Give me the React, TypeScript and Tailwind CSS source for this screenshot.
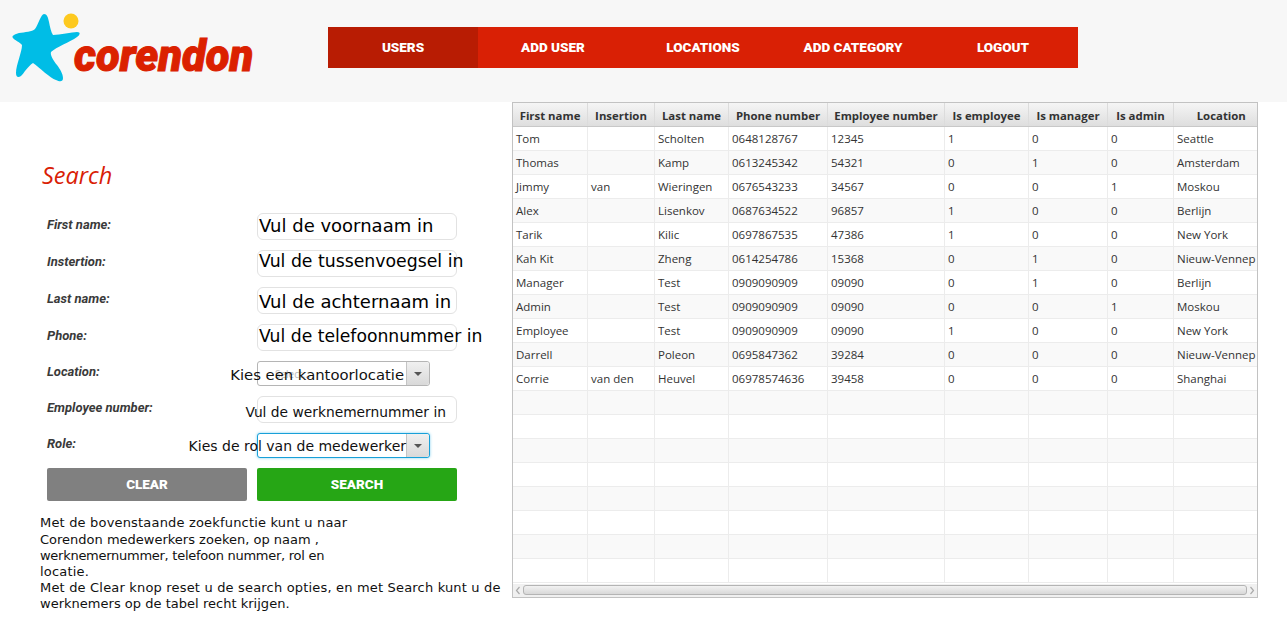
const columns = [
  { name: "First name", width: "w-[74.5px]" },
  { name: "Insertion", width: "w-[67px]" },
  { name: "Last name", width: "w-[74px]" },
  { name: "Phone number", width: "w-[99px]" },
  { name: "Employee number", width: "w-[117px]" },
  { name: "Is employee", width: "w-[84px]" },
  { name: "Is manager", width: "w-[79px]" },
  { name: "Is admin", width: "w-[66px]" },
  { name: "Location", width: "w-[83.5px]" },
];

const rows = [
  ["Tom", "", "Scholten", "0648128767", "12345", "1", "0", "0", "Seattle"],
  ["Thomas", "", "Kamp", "0613245342", "54321", "0", "1", "0", "Amsterdam"],
  ["Jimmy", "van", "Wieringen", "0676543233", "34567", "0", "0", "1", "Moskou"],
  ["Alex", "", "Lisenkov", "0687634522", "96857", "1", "0", "0", "Berlijn"],
  ["Tarik", "", "Kilic", "0697867535", "47386", "1", "0", "0", "New York"],
  ["Kah Kit", "", "Zheng", "0614254786", "15368", "0", "1", "0", "Nieuw-Vennep"],
  ["Manager", "", "Test", "0909090909", "09090", "0", "1", "0", "Berlijn"],
  ["Admin", "", "Test", "0909090909", "09090", "0", "0", "1", "Moskou"],
  ["Employee", "", "Test", "0909090909", "09090", "1", "0", "0", "New York"],
  ["Darrell", "", "Poleon", "0695847362", "39284", "0", "0", "0", "Nieuw-Vennep"],
  ["Corrie", "van den", "Heuvel", "06978574636", "39458", "0", "0", "0", "Shanghai"],
  ...Array.from({ length: 8 }, () => ["", "", "", "", "", "", "", "", ""]),
];

const navItems = ["Users", "Add user", "Locations", "Add category", "Logout"];

function Logo() {
  return (
    <div className="flex w-[328px] shrink-0 items-start pl-[11px] pt-[12px]">
      <svg width="72" height="72" viewBox="11 12 72 72" className="shrink-0">
        <path
          fill="#00bde6"
          d="M44 14 C47 14 48 17 49 22 C50 27 51 32 53 35 C60 35 72 32 77 32 C81 32 80 35 77 37 C70 42 56 47 51 52 C50 55 53 60 57 65 C60 69 63 74 63 78 C63 82 60 82 56 80 C50 78 40 68 33 63 C28 66 24 73 21 76 C18 78 16 77 16 73 C16 65 22 52 22 45 C20 42 14 40 13 38 C11 36 15 34 19 33 C25 32 32 32 35 29 C38 25 41 14 44 14 Z"
        />
        <circle cx="71" cy="21" r="7.5" fill="#fdc91f" />
      </svg>
      <span className="-ml-[9px] mt-[21px] font-['Roboto',sans-serif] text-[43.5px] leading-[48px] font-black text-[#db2100] italic [-webkit-text-stroke:1px_#db2100]">
        corendon
      </span>
    </div>
  );
}

function Header() {
  return (
    <header className="flex h-[102px] bg-[#f7f7f7]">
      <Logo />
      <nav className="mt-[27px] flex h-[41px] w-[750px] bg-[#d92005]">
        {navItems.map((item, i) => (
          <a
            key={item}
            className={`flex w-[150px] items-center justify-center font-['Roboto',sans-serif] text-[13.5px] font-black text-white uppercase ${
              i === 0 ? "bg-[#b81c03]" : ""
            }`}
          >
            {item}
          </a>
        ))}
      </nav>
    </header>
  );
}

function FieldLabel({ children }: { children: string }) {
  return (
    <label className="block w-[210px] shrink-0 pt-[3px] font-['Roboto',sans-serif] text-[13px] leading-[16px] font-bold text-[#3a3a3a] italic">
      {children}
    </label>
  );
}

function TextField({ label, placeholder, textClass }: { label: string; placeholder: string; textClass: string }) {
  return (
    <div className="flex h-[27px] items-start">
      <div className="pt-[1px]">
        <FieldLabel>{label}</FieldLabel>
      </div>
      <div className="flex h-[27px] w-[200px] items-center rounded-[6px] border border-[#e2e2e2] bg-white pl-[1px] font-['DejaVu_Sans',sans-serif] whitespace-nowrap text-black">
        <span className={textClass}>{placeholder}</span>
      </div>
    </div>
  );
}

function SelectField({ label, focused, children }: { label: string; focused?: boolean; children: React.ReactNode }) {
  return (
    <div className="flex h-[25px] items-start">
      <FieldLabel>{label}</FieldLabel>
      <div
        className={`relative flex h-[25px] w-[173px] items-stretch rounded-[3px] border bg-white ${
          focused ? "border-[#18a0d8] shadow-[0_0_3px_#7fd0f0]" : "border-[#b5b5b5]"
        }`}
      >
        <div className="flex-1">{children}</div>
        <div className="flex w-[23px] items-center justify-center rounded-r-[3px] border-l border-[#c4c4c4] bg-gradient-to-b from-[#f0f0f0] to-[#d9d9d9]">
          <span className="h-0 w-0 border-x-[4px] border-t-[4px] border-x-transparent border-t-[#555]" />
        </div>
      </div>
    </div>
  );
}

function SearchForm() {
  return (
    <aside className="w-[512px] shrink-0 pl-[47px]">
      <h1 className="-ml-[5px] mt-[56px] font-['Open_Sans',sans-serif] text-[23.5px] leading-[34px] font-normal text-[#d92005] italic">
        Search
      </h1>
      <div className="mt-[21px] flex w-[410px] flex-col">
        <div className="flex flex-col gap-[10px]">
          <TextField label="First name:" placeholder="Vul de voornaam in" textClass="-mt-[2px] text-[18px]" />
          <TextField label="Instertion:" placeholder="Vul de tussenvoegsel in" textClass="-mt-[4px] text-[17.3px]" />
          <TextField label="Last name:" placeholder="Vul de achternaam in" textClass="mt-[1px] text-[18px]" />
          <TextField label="Phone:" placeholder="Vul de telefoonnummer in" textClass="-mt-[2px] text-[17.2px]" />
          <SelectField label="Location:">
            <span className="absolute top-[5px] left-[17px] font-['Open_Sans',sans-serif] text-[10px] text-[#bbbbbb]">Select...</span>
            <span className="absolute top-[2px] right-[25px] font-['DejaVu_Sans',sans-serif] text-[14.8px] whitespace-nowrap text-[#111]">
              Kies een kantoorlocatie
            </span>
          </SelectField>
          <div className="flex h-[27px] items-start">
            <div className="pt-[1px]">
              <FieldLabel>Employee number:</FieldLabel>
            </div>
            <div className="relative h-[27px] w-[200px] rounded-[6px] border border-[#e2e2e2] bg-white">
              <span className="absolute top-[5px] right-[10px] font-['DejaVu_Sans',sans-serif] text-[13.8px] whitespace-nowrap text-[#111]">
                Vul de werknemernummer in
              </span>
            </div>
          </div>
          <SelectField label="Role:" focused>
            <span className="absolute top-[2px] right-[23px] font-['DejaVu_Sans',sans-serif] text-[14px] whitespace-nowrap text-[#111]">
              Kies de rol van de medewerker
            </span>
          </SelectField>
        </div>
        <div className="mt-[10px] flex gap-[10px]">
          <button className="h-[33px] w-[200px] rounded-[2px] bg-[#808080] font-['Roboto',sans-serif] text-[13.5px] font-black text-white uppercase">
            Clear
          </button>
          <button className="h-[33px] w-[200px] rounded-[2px] bg-[#26a615] font-['Roboto',sans-serif] text-[13.5px] font-black text-white uppercase">
            Search
          </button>
        </div>
      </div>
      <div className="-ml-[7px] mt-[14px] w-[470px] font-['DejaVu_Sans',sans-serif] text-[13px] leading-[16px] tracking-[0.18px] text-[#111]">
        <p className="mb-[1px]">Met de bovenstaande zoekfunctie kunt u naar</p>
        <p className="tracking-[0px]">Corendon medewerkers zoeken, op naam ,</p>
        <p className="tracking-[-0.27px]">werknemernummer, telefoon nummer, rol en</p>
        <p>locatie.</p>
        <p className="whitespace-nowrap">Met de Clear knop reset u de search opties, en met Search kunt u de</p>
        <p className="tracking-[0.02px]">werknemers op de tabel recht krijgen.</p>
      </div>
    </aside>
  );
}

function ScrollBar() {
  return (
    <div className="mt-[1px] flex h-[13px] items-center justify-between bg-[#f0f0f0] px-[2px]">
      <svg width="6" height="9" viewBox="0 0 6 9" fill="none" stroke="#aaaaaa" strokeWidth="1.2">
        <path d="M4.5 1 L1.5 4.5 L4.5 8" />
      </svg>
      <div className="mx-[2px] h-[10px] flex-1 rounded-[3px] border border-[#b4b4b4] bg-gradient-to-b from-[#f2f2f2] to-[#d8d8d8]" />
      <svg width="6" height="9" viewBox="0 0 6 9" fill="none" stroke="#aaaaaa" strokeWidth="1.2">
        <path d="M1.5 1 L4.5 4.5 L1.5 8" />
      </svg>
    </div>
  );
}

function EmployeeTable() {
  return (
    <div className="h-[496px] w-[746px] overflow-hidden border border-[#c2c2c2]">
      <table className="w-[744px] table-fixed border-collapse font-['Open_Sans',sans-serif] text-[11.5px] text-[#333]">
        <thead>
          <tr className="h-[23px] bg-gradient-to-b from-[#f5f5f5] to-[#dedede]">
            {columns.map((col, i) => (
              <th
                key={col.name}
                className={`${col.width} overflow-hidden border-r border-b border-r-[#dcdcdc] border-b-[#c8c8c8] px-0 pt-[2px] pb-0 text-center text-[11.4px] font-bold whitespace-nowrap text-[#333]`}
              >
                <span className={i === 8 ? "pl-[12px]" : ""}>{col.name}</span>
              </th>
            ))}
          </tr>
        </thead>
        <tbody>
          {rows.map((row, r) => (
            <tr key={r} className={`h-[24px] ${r % 2 === 1 ? "bg-[#f9f9f9]" : "bg-white"}`}>
              {row.map((cell, c) => (
                <td
                  key={c}
                  className="overflow-hidden border-r border-b border-[#ececec] pt-[2px] pr-0 pb-0 pl-[3px] whitespace-nowrap"
                >
                  {cell}
                </td>
              ))}
            </tr>
          ))}
        </tbody>
      </table>
      <ScrollBar />
    </div>
  );
}

export default function App() {
  return (
    <div className="h-[619px] w-[1287px] overflow-hidden bg-white">
      <Header />
      <main className="flex">
        <SearchForm />
        <EmployeeTable />
      </main>
    </div>
  );
}
